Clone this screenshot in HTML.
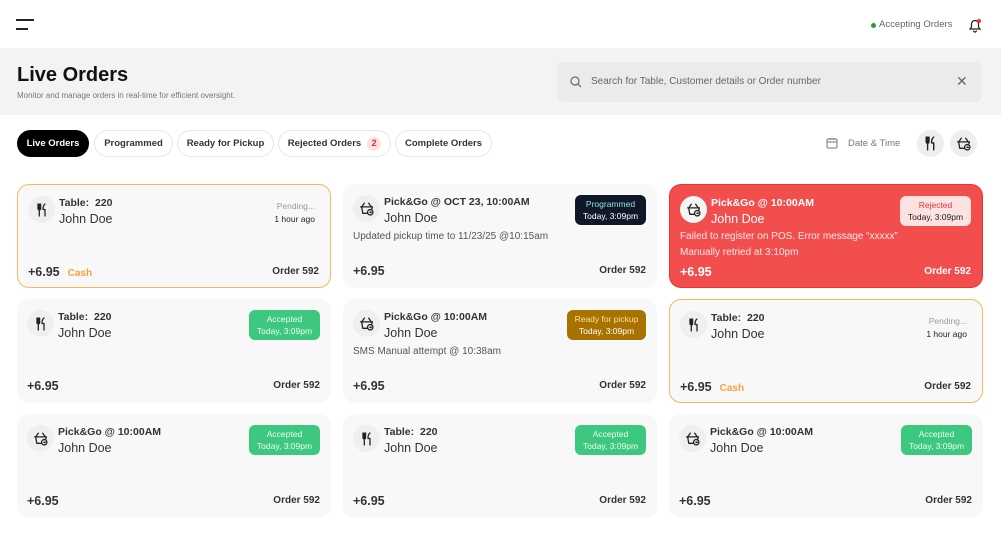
<!DOCTYPE html>
<html><head><meta charset="utf-8"><style>
*{box-sizing:border-box;margin:0;padding:0}
body{width:1001px;height:548px;background:#fff;font-family:"Liberation Sans",sans-serif;color:#222;position:relative;overflow:hidden}
.abs{position:absolute}
.band{left:0;top:48px;width:1001px;height:67px;background:#f3f3f3}
.tab{position:absolute;top:130px;height:27px;border:1px solid #e6e6e6;border-radius:14px;font-size:9.5px;font-weight:bold;color:#333;display:flex;align-items:center;justify-content:center;background:#fff}
.card{position:absolute;width:314px;height:104px;background:#f8f8f8;border-radius:12px}
.ic{position:absolute;left:10px;top:11px;width:27px;height:27px;border-radius:50%;background:#efefef;display:flex;align-items:center;justify-content:center}
.t{position:absolute;left:41px;top:12px;font-size:10.5px;font-weight:bold;color:#333}
.n{position:absolute;left:41px;top:27px;font-size:12.5px;color:#333}
.d{position:absolute;left:10px;top:47px;font-size:10px;color:#555}
.p{position:absolute;left:10px;top:80px;font-size:12.5px;font-weight:bold;color:#333}
.o{position:absolute;right:11px;top:81px;font-size:10px;font-weight:bold;color:#333}
.b{position:absolute;right:11px;top:11px;width:71px;height:30px;border-radius:6px;font-size:8.5px;text-align:center;line-height:12px;padding-top:3px}
.acc{background:#3ec77e;color:#eafff2;width:71px}
.pend{position:absolute;right:15px;top:15px;font-size:8.5px;text-align:right;line-height:13px;color:#222}
.pend span{color:#999}
.cash{color:#f4a33a;font-size:10px;margin-left:8px}
</style></head><body>
<svg width="0" height="0" style="position:absolute"><defs>
<symbol id="fk" viewBox="0 0 14 14"><path d="M3 1v4.5a1.3 1.3 0 0 0 2.6 0V1M4.3 1v12" fill="none" stroke="#222" stroke-width="1.3" stroke-linecap="round"/><path d="M10 1c-1.6 1-2 3-2 5.5h2V13" fill="none" stroke="#222" stroke-width="1.3" stroke-linecap="round" stroke-linejoin="round"/></symbol>
<symbol id="bk" viewBox="0 0 14 14"><path d="M1.5 5.5h11l-0.6 2M11.5 5.5L9 2M2.5 5.5L5 2M2.5 5.5l1 6h4.5" fill="none" stroke="#222" stroke-width="1.2" stroke-linecap="round" stroke-linejoin="round"/><circle cx="10.5" cy="10.5" r="2.5" fill="none" stroke="#222" stroke-width="1.2"/><path d="M9.5 10.5h2M10.8 9.7l0.8 0.8-0.8 0.8" fill="none" stroke="#222" stroke-width="0.9"/></symbol>
</defs></svg>
<div class="abs" style="left:16px;top:19px;width:18px;height:2px;background:#222"></div>
<div class="abs" style="left:16px;top:28px;width:12px;height:2px;background:#222"></div>
<div class="abs" style="left:871px;top:23px;width:5px;height:5px;border-radius:50%;background:#2a9a3a"></div>
<div class="abs" style="left:879px;top:19px;font-size:9.5px;color:#666">Accepting Orders</div>
<svg class="abs" style="left:967px;top:17px" width="16" height="16" viewBox="0 0 16 16"><path d="M3 12h10l-1.5-2V7a3.5 3.5 0 0 0-7 0v3z M6.5 13.5a1.5 1.5 0 0 0 3 0" fill="none" stroke="#222" stroke-width="1.2"/><circle cx="12" cy="4" r="2" fill="#e33"/></svg>
<div class="abs band"></div>
<div class="abs" style="left:17px;top:64px;font-size:20px;font-weight:bold;color:#111">Live Orders</div>
<div class="abs" style="left:17px;top:91px;font-size:8px;color:#777">Monitor and manage orders in real-time for efficient oversight.</div>
<div class="abs" style="left:557px;top:62px;width:425px;height:40px;background:#ebebeb;border-radius:6px"></div>
<svg class="abs" style="left:570px;top:76px" width="12" height="12" viewBox="0 0 12 12"><circle cx="5" cy="5" r="4" fill="none" stroke="#666" stroke-width="1.2"/><path d="M8 8l3 3" stroke="#666" stroke-width="1.2"/></svg>
<div class="abs" style="left:591px;top:76px;font-size:10px;color:#666">Search for Table, Customer details or Order number</div>
<div class="abs" style="left:956px;top:73px;font-size:14px;color:#666">✕</div>
<div class="tab" style="left:17px;width:72px;background:#000;color:#fff;border-color:#000">Live Orders</div>
<div class="tab" style="left:94px;width:79px">Programmed</div>
<div class="tab" style="left:177px;width:97px">Ready for Pickup</div>
<div class="tab" style="left:278px;width:113px">Rejected Orders <span style="display:inline-block;width:14px;height:14px;border-radius:50%;background:#fde2e2;color:#e33;text-align:center;line-height:14px;margin-left:6px">2</span></div>
<div class="tab" style="left:395px;width:97px">Complete Orders</div>
<svg class="abs" style="left:826px;top:137px" width="12" height="12" viewBox="0 0 12 12"><rect x="1" y="2" width="10" height="9" rx="1" fill="none" stroke="#777"/><path d="M1 5h10M4 1v2M8 1v2" stroke="#777"/></svg>
<div class="abs" style="left:848px;top:138px;font-size:9.5px;color:#777">Date &amp; Time</div>
<div class="abs" style="left:917px;top:130px;width:27px;height:27px;border-radius:50%;background:#eee"></div>
<svg class="abs" style="left:923px;top:136px" width="15" height="15"><use href="#fk"/></svg>
<div class="abs" style="left:950px;top:130px;width:27px;height:27px;border-radius:50%;background:#eee"></div>
<svg class="abs" style="left:956px;top:136px" width="15" height="15"><use href="#bk"/></svg>

<!-- row 1 -->
<div class="card" style="left:17px;top:184px;border:1px solid #f4b860">
 <div class="ic"><svg width="14" height="14"><use href="#fk"/></svg></div><div class="t">Table:&nbsp; 220</div><div class="n">John Doe</div>
 <div class="pend"><span>Pending...</span><br>1 hour ago</div>
 <div class="p">+6.95<span class="cash">Cash</span></div><div class="o">Order 592</div></div>
<div class="card" style="left:343px;top:184px">
 <div class="ic"><svg width="15" height="15"><use href="#bk"/></svg></div><div class="t">Pick&amp;Go @ OCT 23, 10:00AM</div><div class="n">John Doe</div>
 <div class="d">Updated pickup time to 11/23/25 @10:15am</div>
 <div class="b" style="background:#101828;color:#fff"><span style="color:#8fe3e3">Programmed</span><br>Today, 3:09pm</div>
 <div class="p">+6.95</div><div class="o">Order 592</div></div>
<div class="card" style="left:669px;top:184px;background:#f24e4e;border:1px solid #e33">
 <div class="ic" style="background:#f5f5f5"><svg width="15" height="15"><use href="#bk"/></svg></div><div class="t" style="color:#fff">Pick&amp;Go @ 10:00AM</div><div class="n" style="color:#fff">John Doe</div>
 <div class="d" style="color:#ffe6e6;line-height:16px;top:44px">Failed to register on POS. Error message “xxxxx”<br>Manually retried at 3:10pm</div>
 <div class="b" style="background:#fde2e2;color:#222"><span style="color:#e33">Rejected</span><br>Today, 3:09pm</div>
 <div class="p" style="color:#fff">+6.95</div><div class="o" style="color:#fff">Order 592</div></div>
<!-- row 2 -->
<div class="card" style="left:17px;top:299px">
 <div class="ic"><svg width="14" height="14"><use href="#fk"/></svg></div><div class="t">Table:&nbsp; 220</div><div class="n">John Doe</div>
 <div class="b acc">Accepted<br>Today, 3:09pm</div>
 <div class="p">+6.95</div><div class="o">Order 592</div></div>
<div class="card" style="left:343px;top:299px">
 <div class="ic"><svg width="15" height="15"><use href="#bk"/></svg></div><div class="t">Pick&amp;Go @ 10:00AM</div><div class="n">John Doe</div>
 <div class="d">SMS Manual attempt @ 10:38am</div>
 <div class="b" style="background:#a87200;color:#fff;width:79px"><span style="color:#ffe08a">Ready for pickup</span><br>Today, 3:09pm</div>
 <div class="p">+6.95</div><div class="o">Order 592</div></div>
<div class="card" style="left:669px;top:299px;border:1px solid #f4b860">
 <div class="ic"><svg width="14" height="14"><use href="#fk"/></svg></div><div class="t">Table:&nbsp; 220</div><div class="n">John Doe</div>
 <div class="pend"><span>Pending...</span><br>1 hour ago</div>
 <div class="p">+6.95<span class="cash">Cash</span></div><div class="o">Order 592</div></div>
<!-- row 3 -->
<div class="card" style="left:17px;top:414px">
 <div class="ic"><svg width="15" height="15"><use href="#bk"/></svg></div><div class="t">Pick&amp;Go @ 10:00AM</div><div class="n">John Doe</div>
 <div class="b acc">Accepted<br>Today, 3:09pm</div>
 <div class="p">+6.95</div><div class="o">Order 592</div></div>
<div class="card" style="left:343px;top:414px">
 <div class="ic"><svg width="14" height="14"><use href="#fk"/></svg></div><div class="t">Table:&nbsp; 220</div><div class="n">John Doe</div>
 <div class="b acc">Accepted<br>Today, 3:09pm</div>
 <div class="p">+6.95</div><div class="o">Order 592</div></div>
<div class="card" style="left:669px;top:414px">
 <div class="ic"><svg width="15" height="15"><use href="#bk"/></svg></div><div class="t">Pick&amp;Go @ 10:00AM</div><div class="n">John Doe</div>
 <div class="b acc">Accepted<br>Today, 3:09pm</div>
 <div class="p">+6.95</div><div class="o">Order 592</div></div>
</body></html>
